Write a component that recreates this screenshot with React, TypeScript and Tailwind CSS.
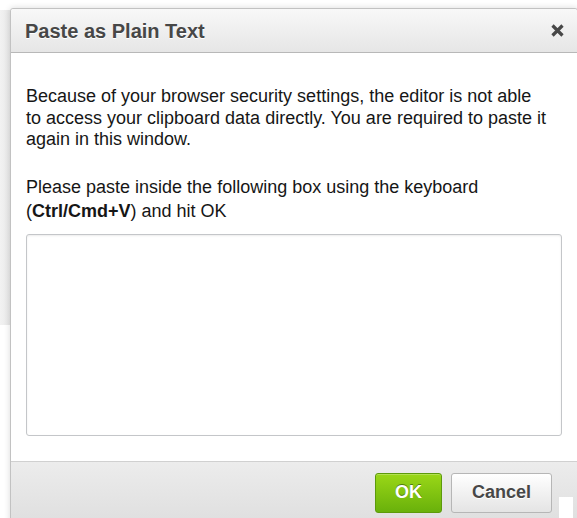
import React from "react";

const font = { fontFamily: '"Liberation Sans", Arial, Helvetica, sans-serif' };

function CloseIcon() {
  return (
    <svg width="13" height="13" viewBox="0 0 13 13" aria-hidden="true">
      <path d="M1.5 1.5 L11.5 11.5 M11.5 1.5 L1.5 11.5" stroke="#474747" strokeWidth="3.2" strokeLinecap="butt" />
    </svg>
  );
}

export default function App() {
  return (
    <div className="relative w-[577px] h-[518px] overflow-hidden bg-white" style={font}>
      {/* page content peeking out behind the dialog */}
      <div className="flex flex-col pt-[10px] w-[10px]">
        <div className="h-[315px] bg-gradient-to-r from-[#f2f2f2] to-[#e8e8e8]" />
      </div>

      <div className="absolute left-[10px] top-[8px] w-[568px] h-[530px] flex flex-col border border-[#c2c2c2] rounded-t-[3px] bg-white shadow-[0_0_6px_rgba(0,0,0,0.15)]">
        <div className="h-[44px] shrink-0 flex items-center justify-between pl-[14px] pr-[13px] rounded-t-[3px] bg-gradient-to-b from-[#f8f8f8] to-[#e6e6e6] border-b border-[#b8b8b8]">
          <span className="text-[20px] font-bold text-[#474747] [text-shadow:0_1px_0_#fff]">Paste as Plain Text</span>
          <CloseIcon />
        </div>

        <div className="flex flex-col px-[15px] pt-[33px] pb-[25px] text-[18px] text-[#161616]">
          <p className="w-[523px] leading-[21.6px]">
            Because of your browser security settings, the editor is not able to access your clipboard data directly. You are required to paste it again in this window.
          </p>
          <p className="mt-[24px] leading-[24px]">
            Please paste inside the following box using the keyboard (<strong>Ctrl/Cmd+V</strong>) and hit OK
          </p>
          <div className="mt-[11px] h-[202px] rounded-[3px] border border-[#c4c6c9] shadow-[inset_0_1px_2px_rgba(0,0,0,0.08)] bg-white" />
        </div>

        <div className="relative flex-1 flex justify-end gap-[9px] pt-[11px] pr-[25px] border-t border-[#d0d0d0] bg-gradient-to-b from-[#ececec] to-[#dcdcdc]">
          <button className="h-[40px] px-[19px] rounded-[3px] border border-[#5c9a0b] bg-gradient-to-b from-[#9ad717] to-[#69b10b] text-[18px] font-bold text-white [text-shadow:0_-1px_0_#4f7d0f] shadow-[inset_0_1px_0_rgba(255,255,255,0.25)]">
            OK
          </button>
          <button className="h-[40px] px-[20px] rounded-[3px] border border-[#b6b6b6] bg-gradient-to-b from-[#ffffff] to-[#e4e4e4] text-[18px] font-bold text-[#474747] [text-shadow:0_1px_0_#fff]">
            Cancel
          </button>
          <div className="absolute right-[4px] top-[35px] w-[14px] h-[22px] bg-white" />
        </div>
      </div>
    </div>
  );
}
